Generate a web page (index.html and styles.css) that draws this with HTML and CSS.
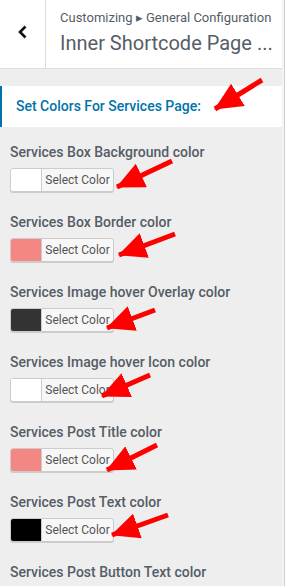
FILE: index.html
```html
<!DOCTYPE html>
<html lang="en">
<head>
    <meta charset="UTF-8">
    <meta name="viewport" content="width=device-width, initial-scale=1.0">
    <title>Inner Shortcode Page Settings</title>
    <link rel="stylesheet" href="styles.css">
</head>
<body>
    <div class="page">
        <div class="panel">
            <!-- header -->
            <div class="panel-header">
                <button class="back-btn" title="Back">
                    <svg width="10" height="14" viewBox="0 0 10 14">
                        <polyline points="7.5,1.5 2,7 7.5,12.5" fill="none" stroke="#111" stroke-width="2.6"/>
                    </svg>
                </button>
                <div class="panel-title">
                    <div class="breadcrumb">Customizing &#9656; General Configuration</div>
                    <div class="section-name">Inner Shortcode Page ...</div>
                </div>
            </div>

            <div class="group-title">Set Colors For Services Page:</div>

            <div class="control">
                <div class="control-label">Services Box Background color</div>
                <button class="color-btn"><span class="swatch swatch-white"></span><span class="btn-text">Select Color</span></button>
            </div>
            <div class="control">
                <div class="control-label">Services Box Border color</div>
                <button class="color-btn"><span class="swatch swatch-salmon"></span><span class="btn-text">Select Color</span></button>
            </div>
            <div class="control">
                <div class="control-label">Services Image hover Overlay color</div>
                <button class="color-btn"><span class="swatch swatch-dark"></span><span class="btn-text">Select Color</span></button>
            </div>
            <div class="control">
                <div class="control-label">Services Image hover Icon color</div>
                <button class="color-btn"><span class="swatch swatch-white"></span><span class="btn-text">Select Color</span></button>
            </div>
            <div class="control">
                <div class="control-label">Services Post Title color</div>
                <button class="color-btn"><span class="swatch swatch-salmon"></span><span class="btn-text">Select Color</span></button>
            </div>
            <div class="control">
                <div class="control-label">Services Post Text color</div>
                <button class="color-btn"><span class="swatch swatch-black"></span><span class="btn-text">Select Color</span></button>
            </div>
            <div class="control">
                <div class="control-label">Services Post Button Text color</div>
                <button class="color-btn"><span class="swatch swatch-white"></span><span class="btn-text">Select Color</span></button>
            </div>
        </div>
        <div class="scroll-edge"></div>
    </div>

    <!-- annotation arrows -->
    <svg class="arrows" width="285" height="586" viewBox="0 0 285 586">
        <defs>
            <marker id="head" viewBox="0 0 28 26" refX="27" refY="13" markerWidth="28" markerHeight="26" markerUnits="userSpaceOnUse" orient="auto">
                <path d="M0,0 L28,13 L0,26 z" fill="#f00"/>
            </marker>
        </defs>
        <g stroke="#f00" stroke-width="5" marker-end="url(#head)">
            <line x1="262" y1="80" x2="215" y2="109"/>
            <line x1="172" y1="161" x2="117" y2="187"/>
            <line x1="175" y1="234" x2="119" y2="255"/>
            <line x1="155" y1="310" x2="107" y2="328"/>
            <line x1="150" y1="375" x2="102" y2="396"/>
            <line x1="157" y1="445" x2="107" y2="470"/>
            <line x1="168" y1="515" x2="112" y2="535"/>
        </g>
    </svg>
</body>
</html>
```

FILE: styles.css
```css
body {
    margin: 0;
    background: #eee;
    font-family: Roboto, 'Noto Sans', sans-serif;
    color: #555d66;
    overflow: hidden;
}

.page {
    display: flex;
    min-height: 100vh;
}

.panel {
    width: 282px;
    background: #eee;
}

.scroll-edge {
    width: 2px;
    background: #f4f4f4;
    border-right: 1px solid #cfcfcf;
}

.panel-header {
    display: flex;
    height: 68px;
    background: #fff;
    border-bottom: 1px solid #ddd;
}

.back-btn {
    width: 46px;
    padding: 0;
    border: none;
    border-right: 1px solid #ddd;
    background: #fff;
    display: flex;
    align-items: center;
    justify-content: center;
    padding-bottom: 4px;
}

.panel-title {
    padding: 9px 0 0 14px;
    white-space: nowrap;
    overflow: hidden;
}

.breadcrumb {
    font-size: 13px;
    line-height: 18px;
}

.section-name {
    font-size: 20px;
    line-height: 28px;
    margin-top: 2px;
}

.group-title {
    margin-top: 17px;
    background: #fff;
    border-left: 2px solid #0073aa;
    color: #0073aa;
    font-size: 14px;
    font-weight: 500;
    height: 41px;
    line-height: 41px;
    padding-left: 14px;
    margin-bottom: 15px;
}

.control {
    padding: 0 10px;
    height: 70px;
}

.control-label {
    font-size: 14px;
    font-weight: 500;
    line-height: 20px;
    margin-bottom: 6px;
}

.color-btn {
    display: flex;
    height: 24px;
    width: 104px;
    padding: 0;
    border: 1px solid #ccc;
    border-radius: 3px;
    background: #f7f7f7;
    box-shadow: 0 1px 0 #ccc;
    overflow: hidden;
    font-family: inherit;
}

.swatch {
    width: 30px;
    height: 100%;
    border-right: 1px solid #ccc;
}

.swatch-white { background: #fff; }
.swatch-salmon { background: #f48784; }
.swatch-dark { background: #333; }
.swatch-black { background: #000; }

.btn-text {
    flex: 1;
    font-size: 12px;
    line-height: 22px;
    color: #555;
    text-align: center;
}

.arrows {
    position: absolute;
    top: 0;
    left: 0;
    pointer-events: none;
}
```
